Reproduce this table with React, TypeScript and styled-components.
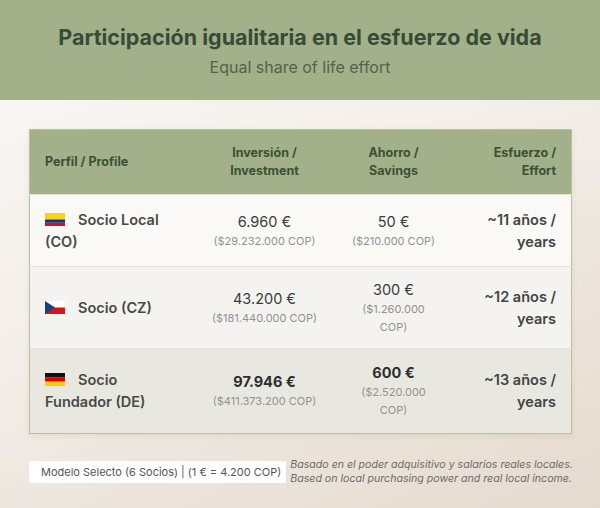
import styled, { createGlobalStyle } from 'styled-components'

const GlobalStyle = createGlobalStyle`
  html, body {
    margin: 0;
    padding: 0;
  }
  body {
    font-family: Inter, 'Noto Sans', sans-serif;
    background: #f3eee9;
  }
`

const Page = styled.div`
  width: 600px;
  height: 508px;
  display: flex;
  flex-direction: column;
  background: linear-gradient(155deg, #fbf9f7 0%, #f3eee9 45%, #e5dace 100%);
  overflow: hidden;
`

const Banner = styled.header`
  height: 100px;
  box-sizing: border-box;
  background: #a3b18a;
  display: flex;
  flex-direction: column;
  align-items: center;
  padding-top: 22px;
`

const Title = styled.h1`
  margin: 0;
  font-size: 21.5px;
  font-weight: 700;
  color: #364b38;
  line-height: 30px;
`

const Subtitle = styled.p`
  margin: 5px 0 0;
  font-size: 16px;
  font-weight: 400;
  color: #52624d;
  line-height: 20px;
`

const Content = styled.main`
  padding: 29px 29px 0;
  display: flex;
  flex-direction: column;
  gap: 24px;
`

const Table = styled.table`
  width: 542px;
  border-collapse: collapse;
  table-layout: fixed;
  border: 1px solid #b6bf9f;
  box-shadow: 0 2px 6px rgba(80, 70, 50, 0.08);
`

const HeadRow = styled.tr`
  background: #a3b18a;
  height: 65px;
`

type Align = 'left' | 'center' | 'right'

const sidePad = (a: Align) =>
  a === 'left' ? '0 22px 0 15px' : a === 'right' ? '0 15px 0 12px' : '0 12px'

const Th = styled.th<{ $align: Align }>`
  font-size: 12.5px;
  font-weight: 700;
  color: #3a5035;
  line-height: 18px;
  text-align: ${(p) => p.$align};
  padding: ${(p) => sidePad(p.$align)};
`

const Row = styled.tr<{ $bg: string; $h: number }>`
  background: ${(p) => p.$bg};
  height: ${(p) => p.$h}px;
  border-top: 1px solid #e6e3dc;
`

const Td = styled.td<{ $align: Align }>`
  text-align: ${(p) => p.$align};
  vertical-align: middle;
  padding: ${(p) => sidePad(p.$align)};
`

const ProfileName = styled.span`
  font-size: 14.5px;
  font-weight: 600;
  color: #474b48;
  line-height: 22px;
`

const Flag = styled.svg`
  width: 20px;
  height: 13px;
  vertical-align: -1px;
  margin-right: 13px;
`

const Amount = styled.div<{ $strong?: boolean }>`
  font-size: 14.5px;
  font-weight: ${(p) => (p.$strong ? 700 : 400)};
  color: ${(p) => (p.$strong ? '#2b2f31' : '#3a3d3f')};
  line-height: 20px;
`

const Cop = styled.div`
  font-size: 11px;
  color: #929290;
  line-height: 18px;
`

const Effort = styled.span`
  font-size: 14.5px;
  font-weight: 600;
  color: #414446;
  line-height: 22px;
`

const Footer = styled.div`
  display: flex;
  align-items: center;
  gap: 4px;
`

const Badge = styled.div`
  background: #ffffff;
  font-size: 11px;
  color: #565656;
  padding: 0 5px 0 12px;
  height: 22px;
  line-height: 22px;
  white-space: nowrap;
`

const Note = styled.p`
  margin: 0;
  font-size: 10.6px;
  font-style: italic;
  color: #6b6b6b;
  line-height: 14px;
  white-space: nowrap;
`

const FlagCO = () => (
  <Flag viewBox="0 0 20 13">
    <rect width="20" height="6.5" fill="#fcd116" />
    <rect y="6.5" width="20" height="3.25" fill="#003893" />
    <rect y="9.75" width="20" height="3.25" fill="#ce1126" />
  </Flag>
)

const FlagCZ = () => (
  <Flag viewBox="0 0 20 13">
    <rect width="20" height="6.5" fill="#ffffff" />
    <rect y="6.5" width="20" height="6.5" fill="#d7141a" />
    <polygon points="0,0 10,6.5 0,13" fill="#11457e" />
  </Flag>
)

const FlagDE = () => (
  <Flag viewBox="0 0 20 13">
    <rect width="20" height="4.34" fill="#111111" />
    <rect y="4.33" width="20" height="4.34" fill="#dd0000" />
    <rect y="8.66" width="20" height="4.34" fill="#ffce00" />
  </Flag>
)

const rows = [
  {
    flag: <FlagCO />,
    name: 'Socio Local (CO)',
    inv: '6.960 €',
    invCop: '($29.232.000 COP)',
    sav: '50 €',
    savCop: '($210.000 COP)',
    effort: '~11 años / years',
    bg: '#faf9f6',
    h: 72,
    strong: false,
  },
  {
    flag: <FlagCZ />,
    name: 'Socio (CZ)',
    inv: '43.200 €',
    invCop: '($181.440.000 COP)',
    sav: '300 €',
    savCop: '($1.260.000 COP)',
    effort: '~12 años / years',
    bg: '#f4f3ef',
    h: 82,
    strong: false,
  },
  {
    flag: <FlagDE />,
    name: 'Socio Fundador (DE)',
    inv: '97.946 €',
    invCop: '($411.373.200 COP)',
    sav: '600 €',
    savCop: '($2.520.000 COP)',
    effort: '~13 años / years',
    bg: '#e9e8e0',
    h: 85,
    strong: true,
  },
]

export default function App() {
  return (
    <>
      <GlobalStyle />
      <Page>
        <Banner>
          <Title>Participación igualitaria en el esfuerzo de vida</Title>
          <Subtitle>Equal share of life effort</Subtitle>
        </Banner>
        <Content>
          <Table>
            <colgroup>
              <col style={{ width: 160 }} />
              <col style={{ width: 150 }} />
              <col style={{ width: 108 }} />
              <col style={{ width: 124 }} />
            </colgroup>
            <thead>
              <HeadRow>
                <Th $align="left">Perfil / Profile</Th>
                <Th $align="center">
                  Inversión /<br />
                  Investment
                </Th>
                <Th $align="center">
                  Ahorro /<br />
                  Savings
                </Th>
                <Th $align="right">
                  Esfuerzo /<br />
                  Effort
                </Th>
              </HeadRow>
            </thead>
            <tbody>
              {rows.map((r) => (
                <Row key={r.name} $bg={r.bg} $h={r.h}>
                  <Td $align="left">
                    <ProfileName>
                      {r.flag}
                      {r.name}
                    </ProfileName>
                  </Td>
                  <Td $align="center">
                    <Amount $strong={r.strong}>{r.inv}</Amount>
                    <Cop>{r.invCop}</Cop>
                  </Td>
                  <Td $align="center">
                    <Amount $strong={r.strong}>{r.sav}</Amount>
                    <Cop>{r.savCop}</Cop>
                  </Td>
                  <Td $align="right">
                    <Effort>{r.effort}</Effort>
                  </Td>
                </Row>
              ))}
            </tbody>
          </Table>
          <Footer>
            <Badge>Modelo Selecto (6 Socios) | (1 € = 4.200 COP)</Badge>
            <Note>
              Basado en el poder adquisitivo y salarios reales locales.
              <br />
              Based on local purchasing power and real local income.
            </Note>
          </Footer>
        </Content>
      </Page>
    </>
  )
}
